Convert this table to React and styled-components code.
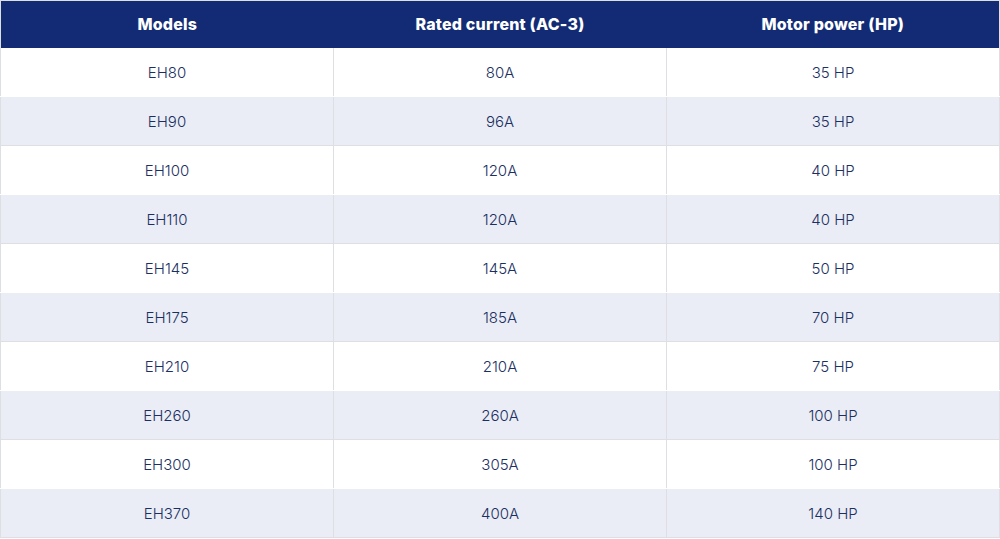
import React from 'react';
import styled, { createGlobalStyle } from 'styled-components';

const rows = [
  ['EH80', '80A', '35 HP'],
  ['EH90', '96A', '35 HP'],
  ['EH100', '120A', '40 HP'],
  ['EH110', '120A', '40 HP'],
  ['EH145', '145A', '50 HP'],
  ['EH175', '185A', '70 HP'],
  ['EH210', '210A', '75 HP'],
  ['EH260', '260A', '100 HP'],
  ['EH300', '305A', '100 HP'],
  ['EH370', '400A', '140 HP'],
];

const GlobalStyle = createGlobalStyle`
  body {
    margin: 0;
    background: #fff;
    font-family: Inter, "Open Sans", sans-serif;
  }
`;

const Table = styled.table`
  width: 1000px;
  border-collapse: collapse;
  table-layout: fixed;
  border: 1px solid #dedfe3;
`;

const HeadCell = styled.th`
  height: 46px;
  padding: 0 0 1px;
  background: #132b74;
  color: #fff;
  font-size: 16px;
  font-weight: 800;
  letter-spacing: 0.2px;
  text-align: center;
  border-top: 1px solid #dedfe3;
`;

const Row = styled.tr`
  background: ${(p) => (p.$alt ? '#eaedf5' : '#fff')};
`;

const Cell = styled.td`
  height: 46px;
  padding: 1px 0;
  text-align: center;
  font-size: 15px;
  font-weight: 300;
  color: #1b2f62;
  border-bottom: 1px solid ${(p) => (p.$alt ? '#dedfe3' : '#fff')};
  border-left: 1px solid #dedfe3;
  &:first-child {
    border-left: none;
  }
`;

export default function App() {
  return (
    <>
      <GlobalStyle />
      <Table>
        <thead>
          <tr>
            <HeadCell>Models</HeadCell>
            <HeadCell>Rated current (AC-3)</HeadCell>
            <HeadCell>Motor power (HP)</HeadCell>
          </tr>
        </thead>
        <tbody>
          {rows.map((r, i) => (
            <Row key={r[0]} $alt={i % 2 === 1}>
              {r.map((v) => (
                <Cell key={v} $alt={i % 2 === 1}>{v}</Cell>
              ))}
            </Row>
          ))}
        </tbody>
      </Table>
    </>
  );
}
